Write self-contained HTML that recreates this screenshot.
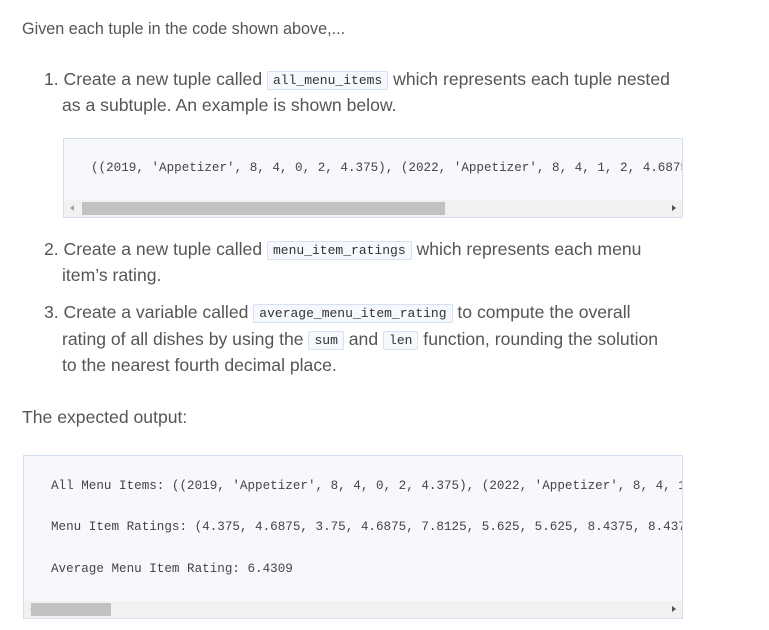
<!DOCTYPE html>
<html><head><meta charset="utf-8"><style>
body{margin:0;width:769px;height:630px;background:#fff;font-family:"Liberation Sans",sans-serif;color:#555;font-size:17.6px;position:relative;overflow:hidden}
.l{position:absolute;white-space:nowrap;line-height:22px}
code{font-family:"Liberation Mono",monospace;font-size:13px;color:#333;background:#f5f8fc;border:1px solid #d6e1f2;border-radius:2px;padding:1px 5px;position:relative;top:-1px}
.box{position:absolute;background:#f7f8fb;border:1px solid #d3dff0;overflow:hidden}
.pre{position:absolute;font-family:"Liberation Mono",monospace;font-size:12.6px;color:#444;white-space:pre}
.sb{position:absolute;left:0;right:0;bottom:0;height:17px;background:#f1f1f1}
.th{position:absolute;top:2px;height:13px;background:#c1c1c1}
.al,.ar{position:absolute;top:5px;width:0;height:0;border-top:3px solid transparent;border-bottom:3px solid transparent}
.al{left:6px;border-right:4px solid #a3a3a3}.ar{right:6px;border-left:4px solid #505050}
</style></head><body>
<div class="l" style="left:22px;top:18px;font-size:16.2px">Given each tuple in the code shown above,...</div>
<div class="l" style="left:44px;top:68px">1. Create a new tuple called <code>all_menu_items</code> which represents each tuple nested</div>
<div class="l" style="left:62px;top:94px">as a subtuple. An example is shown below.</div>
<div class="box" style="left:63px;top:138px;width:618px;height:78px">
<div class="pre" style="left:27px;top:22px">((2019, 'Appetizer', 8, 4, 0, 2, 4.375), (2022, 'Appetizer', 8, 4, 1, 2, 4.6875)</div>
<div class="sb"><div class="al"></div><div class="th" style="left:18px;width:363px"></div><div class="ar"></div></div>
</div>
<div class="l" style="left:44px;top:238px">2. Create a new tuple called <code>menu_item_ratings</code> which represents each menu</div>
<div class="l" style="left:62px;top:264px">item’s rating.</div>
<div class="l" style="left:44px;top:301px">3. Create a variable called <code>average_menu_item_rating</code> to compute the overall</div>
<div class="l" style="left:62px;top:328px">rating of all dishes by using the <code>sum</code> and <code>len</code> function, rounding the solution</div>
<div class="l" style="left:62px;top:354px">to the nearest fourth decimal place.</div>
<div class="l" style="left:22px;top:406px">The expected output:</div>
<div class="box" style="left:23px;top:455px;width:658px;height:162px">
<div class="pre" style="left:27px;top:23px">All Menu Items: ((2019, 'Appetizer', 8, 4, 0, 2, 4.375), (2022, 'Appetizer', 8, 4, 1</div>
<div class="pre" style="left:27px;top:64px">Menu Item Ratings: (4.375, 4.6875, 3.75, 4.6875, 7.8125, 5.625, 5.625, 8.4375, 8.4375</div>
<div class="pre" style="left:27px;top:106px">Average Menu Item Rating: 6.4309</div>
<div class="sb"><div class="al"></div><div class="th" style="left:7px;width:80px"></div><div class="ar"></div></div>
</div>
</body></html>
